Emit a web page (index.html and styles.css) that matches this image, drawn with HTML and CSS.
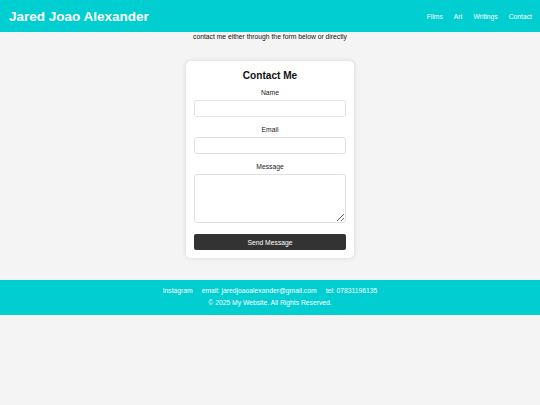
FILE: index.html
```html
<!DOCTYPE html>
<html lang="en">
<head>
<meta charset="utf-8">
<title>Contact - Jared Joao Alexander</title>
<link rel="stylesheet" href="styles.css">
</head>
<body>
<header class="site-header">
  <h1 class="site-title">Jared Joao Alexander</h1>
  <nav class="site-nav">
    <a href="#">Films</a>
    <a href="#">Art</a>
    <a href="#">Writings</a>
    <a href="#">Contact</a>
  </nav>
</header>
<p class="intro">contact me either through the form below or directly</p>
<main class="card">
  <h2 class="card-title">Contact Me</h2>
  <form class="form">
    <label class="label" for="name">Name</label>
    <input class="field" id="name" type="text">
    <label class="label" for="email">Email</label>
    <input class="field" id="email" type="email">
    <label class="label" for="msg">Message</label>
    <textarea class="field area" id="msg"></textarea>
    <button class="send" type="button">Send Message</button>
  </form>
</main>
<footer class="site-footer">
  <div class="footer-links">
    <a href="#">Instagram</a>
    <span>email: jaredjoaoalexander@gmail.com</span>
    <span>tel: 07831196135</span>
  </div>
  <div class="copy">© 2025 My Website. All Rights Reserved.</div>
</footer>
</body>
</html>
```
FILE: styles.css
```css
html, body {
  margin: 0;
  padding: 0;
}
body {
  background: #f4f4f4;
  font-family: "Liberation Sans", Arial, sans-serif;
  color: #111;
}
.site-header {
  height: 32px;
  background: #00ced1;
  display: flex;
  align-items: center;
  justify-content: space-between;
  padding: 0 8px 0 9px;
}
.site-title {
  margin: 0;
  font-size: 13.5px;
  font-weight: bold;
  color: #fff;
}
.site-nav {
  display: flex;
  gap: 11px;
}
.site-nav a {
  color: #fff;
  text-decoration: none;
  font-size: 6.75px;
}
.intro {
  margin: 0;
  text-align: center;
  font-size: 6.75px;
  line-height: 9px;
}
.card {
  box-sizing: border-box;
  width: 168px;
  margin: 20px auto 0;
  background: #fff;
  border-radius: 5px;
  padding: 9px 8px 8px;
  box-shadow: 0 0 5px rgba(0, 0, 0, 0.12);
}
.card-title {
  margin: 0;
  text-align: center;
  font-size: 10.1px;
  line-height: 12px;
  color: #111;
}
.form {
  display: flex;
  flex-direction: column;
  margin-top: 7px;
}
.label {
  font-size: 6.75px;
  line-height: 8px;
  text-align: center;
  margin-bottom: 3px;
  color: #222;
}
.field {
  box-sizing: border-box;
  width: 100%;
  height: 17px;
  border: 1px solid #e2e2e2;
  border-radius: 3px;
  margin: 0 0 9px;
  padding: 2px;
  font-size: 6.75px;
  background: #fff;
}
.area {
  height: 49px;
  margin-bottom: 11px;
  display: block;
}
.send {
  height: 16px;
  border: none;
  border-radius: 2px;
  background: #333;
  color: #fff;
  font-family: "Liberation Sans", Arial, sans-serif;
  font-size: 6.75px;
  padding: 0;
}
.site-footer {
  margin-top: 22px;
  background: #00ced1;
  color: #fff;
  text-align: center;
  font-size: 6.75px;
  line-height: 12px;
  padding: 5px 0 6px;
}
.footer-links {
  display: flex;
  justify-content: center;
  gap: 9px;
}
.footer-links a {
  color: #fff;
  text-decoration: none;
}
```
